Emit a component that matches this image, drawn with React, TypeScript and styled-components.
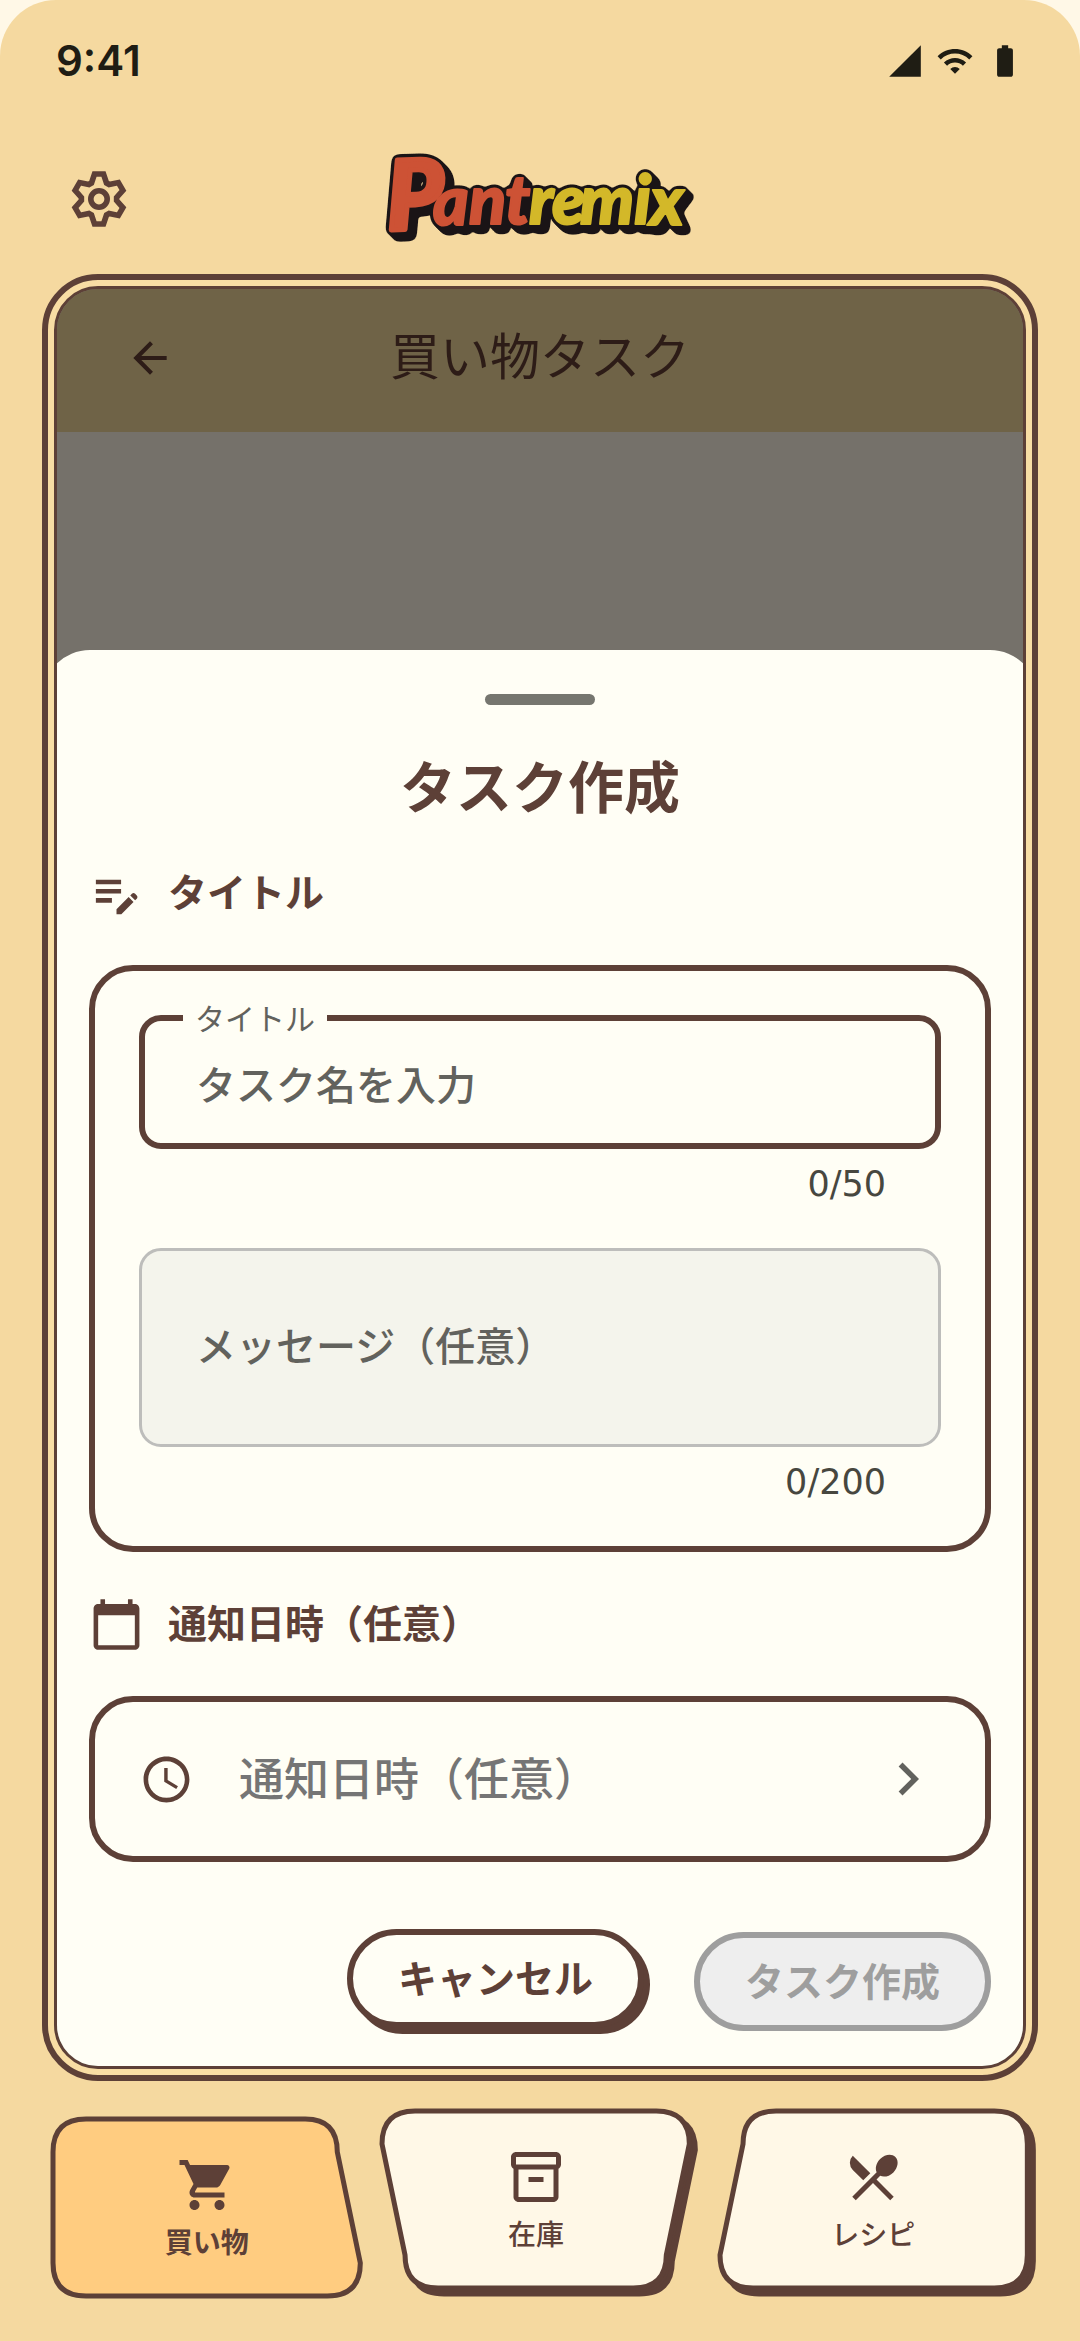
import React, { useState } from "react";
import styled, { createGlobalStyle } from "styled-components";
import {
  MdArrowBack,
  MdBatteryFull,
  MdCalendarToday,
  MdChevronRight,
  MdEditNote,
  MdOutlineInventory2,
  MdRestaurantMenu,
  MdSchedule,
  MdShoppingCart,
  MdSignalCellular4Bar,
  MdWifi,
} from "react-icons/md";

const color = {
  page: "#fff8e7",
  sand: "#f5d9a0",
  brown: "#5d4037",
  paper: "#fffef5",
  cream: "#fff8e7",
  active: "#ffcc80",
  hint: "#62625d",
  ink: "#1f1d14",
};

const GlobalStyle = createGlobalStyle`
  *, *::before, *::after { box-sizing: border-box; }
  body {
    margin: 0;
    background: ${color.page};
    font-family: "Noto Sans CJK JP", "Noto Sans", sans-serif;
    color: ${color.brown};
  }
  button, input, textarea { font: inherit; color: inherit; margin: 0; }
  svg { display: block; flex: none; }
`;

const Screen = styled.div`
  min-height: 100vh;
  display: flex;
  flex-direction: column;
  background: ${color.sand};
  border-radius: 56px 56px 0 0;
`;

const StatusBar = styled.div`
  height: 124px;
  padding: 0 56px 2px;
  display: flex;
  align-items: center;
  justify-content: space-between;
  color: ${color.ink};
`;

const Clock = styled.span`
  font-family: Inter, "Noto Sans", sans-serif;
  font-size: 42px;
  font-weight: 600;
  line-height: 48px;
`;

const StatusIcons = styled.div`
  display: flex;
  gap: 12px;
`;

const AppBar = styled.header`
  height: 150px;
  padding: 0 66px;
  display: grid;
  grid-template-columns: 1fr auto 1fr;
  align-items: center;
`;

const IconButton = styled.button`
  width: max-content;
  padding: 0;
  border: 0;
  background: none;
  cursor: pointer;
`;

const Frame = styled.main`
  flex: 1;
  display: flex;
  margin: 0 42px;
  padding: 6px;
  border: 6px solid ${color.brown};
  border-radius: 56px;
  background: #f8dda4;
`;

const Viewport = styled.div`
  flex: 1;
  min-width: 0;
  display: flex;
  flex-direction: column;
  border: 3px solid ${color.brown};
  border-radius: 44px;
  overflow: hidden;
  background: #75716a;
`;

const PageBar = styled.div`
  height: 143px;
  padding: 0 68px 6px;
  display: grid;
  grid-template-columns: 1fr auto 1fr;
  align-items: center;
  background: #6f6347;
  color: #2d1c17;
`;

const PageTitle = styled.h1`
  margin: 0;
  padding-bottom: 10px;
  font-size: 50px;
  font-weight: 400;
  line-height: 64px;
`;

const Scrim = styled.div`
  flex: 1;
`;

const Sheet = styled.form`
  margin: 0 -15px;
  padding: 44px 47px 32px;
  display: flex;
  flex-direction: column;
  border-radius: 48px 48px 0 0;
  background: ${color.paper};
`;

const Handle = styled.div`
  align-self: center;
  width: 110px;
  height: 11px;
  border-radius: 6px;
  background: #76766f;
`;

const SheetTitle = styled.h2`
  margin: 37px 0 0;
  text-align: center;
  font-size: 56px;
  font-weight: 700;
  line-height: 84px;
`;

const SectionHeading = styled.h3<{ $first?: boolean }>`
  margin: ${(p) => (p.$first ? 40 : 45)}px 0 44px;
  display: flex;
  align-items: flex-start;
  gap: 24px;
  font-size: 39px;
  font-weight: 700;
  line-height: 49px;
`;

const Card = styled.div`
  padding: 30px 44px 40px;
  border: 6px solid ${color.brown};
  border-radius: 44px;
`;

const OutlinedField = styled.fieldset`
  min-width: 0;
  margin: 0;
  padding: 0;
  border: 6px solid ${color.brown};
  border-radius: 22px;
`;

const FieldLegend = styled.legend`
  margin-left: 38px;
  padding: 0 12px;
  font-size: 30px;
  line-height: 33px;
  color: ${color.hint};
`;

const TextInput = styled.input`
  display: block;
  width: 100%;
  height: 109px;
  padding: 0 51px 12px;
  border: 0;
  outline: 0;
  background: none;
  font-size: 40px;
  font-weight: 500;

  &::placeholder { color: ${color.hint}; opacity: 1; }
`;

const Message = styled.textarea`
  display: block;
  width: 100%;
  height: 199px;
  margin-top: 40px;
  padding: 63px 54px;
  border: 3px solid #bdbdbb;
  border-radius: 22px;
  outline: 0;
  resize: none;
  background: #f4f4ec;
  font-size: 40px;
  font-weight: 500;
  line-height: 60px;

  &::placeholder { color: ${color.hint}; opacity: 1; }
`;

const Counter = styled.div`
  margin-top: 11px;
  padding-right: 55px;
  text-align: right;
  font-family: "DejaVu Sans", "Noto Sans", sans-serif;
  font-size: 35px;
  line-height: 48px;
  color: #47473f;
`;

const DateButton = styled.button`
  height: 166px;
  padding: 0 44px;
  display: flex;
  align-items: center;
  border: 6px solid ${color.brown};
  border-radius: 44px;
  background: none;
  text-align: left;
  cursor: pointer;
`;

const DateText = styled.span`
  flex: 1;
  padding: 0 0 6px 45px;
  font-size: 45px;
  font-weight: 500;
  color: #757575;
`;

const Actions = styled.div`
  margin-top: 67px;
  display: flex;
  justify-content: flex-end;
  align-items: center;
  gap: 44px;
`;

const Pill = styled.button<{ $raised?: boolean }>`
  width: 297px;
  height: 99px;
  padding: 0 0 6px;
  border: 6px solid ${color.brown};
  border-radius: 50px;
  background: ${color.paper};
  font-size: 39px;
  font-weight: 700;
  margin: ${(p) => (p.$raised ? "0 6px 6px 0" : "0")};
  box-shadow: ${(p) => (p.$raised ? `6px 6px 0 ${color.brown}` : "none")};
  cursor: pointer;

  &:disabled {
    border-color: #9e9e9e;
    background: #eeeeee;
    color: #9e9e9e;
    cursor: default;
  }
`;

const TabBar = styled.nav`
  margin: 27px 42px 42px;
  display: grid;
  grid-template-columns: repeat(3, 1fr);
  gap: 16px;
`;

const Tab = styled.a<{ $active: boolean }>`
  position: relative;
  isolation: isolate;
  height: 183px;
  margin: ${(p) => (p.$active ? "8px 0 0 8px" : "0 8px 8px 0")};
  padding-top: 39px;
  display: flex;
  flex-direction: column;
  align-items: center;
  gap: 6px;
  font-size: 28px;
  font-weight: ${(p) => (p.$active ? 700 : 500)};
  line-height: 40px;
  color: inherit;
  text-decoration: none;
`;

const TabShape = styled.svg`
  position: absolute;
  inset: 0;
  z-index: -1;
  width: 100%;
  height: 100%;
  overflow: visible;
`;

const tabs = [
  {
    label: "買い物",
    Icon: MdShoppingCart,
    path: "M36 3H255Q287 3 287 36L310 147Q310 180 277 180H36Q3 180 3 147V36Q3 3 36 3Z",
  },
  {
    label: "在庫",
    Icon: MdOutlineInventory2,
    path: "M36 3H277Q310 3 310 36L287 147Q287 180 254 180H59Q26 180 26 147L3 36Q3 3 36 3Z",
  },
  {
    label: "レシピ",
    Icon: MdRestaurantMenu,
    path: "M59 3H277Q310 3 310 36V147Q310 180 277 180H36Q3 180 3 147L26 36Q26 3 59 3Z",
  },
];

function GearIcon() {
  const tooth = [
    [-7.5, -16],
    [-4.5, -25],
    [4.5, -25],
    [7.5, -16],
  ];
  const points = [0, 60, 120, 180, 240, 300]
    .flatMap((deg) => {
      const a = (deg * Math.PI) / 180;
      return tooth.map(
        ([x, y]) =>
          `${(x * Math.cos(a) - y * Math.sin(a)).toFixed(2)},${(x * Math.sin(a) + y * Math.cos(a)).toFixed(2)}`
      );
    })
    .join(" ");
  return (
    <svg width="66" height="66" viewBox="-33 -33 66 66" fill="none" stroke={color.brown} strokeWidth="5.6" aria-hidden="true">
      <polygon points={points} />
      <circle r="8.2" />
    </svg>
  );
}

const LogoSvg = styled.svg`
  overflow: visible;
  font-family: Lato, "Open Sans", sans-serif;
  font-weight: 900;
  font-style: italic;

  text { stroke-width: 2px; stroke-linejoin: round; }
  .initial { stroke-width: 5px; }
  .red { fill: #cd5235; stroke: #cd5235; }
  .yellow { fill: #d3b829; stroke: #d3b829; }
`;

function Logo() {
  return (
    <LogoSvg width="312" height="90" viewBox="0 0 312 90" role="img" aria-label="Pantremix">
      <defs>
        {/* A rounded black outline, extruded towards the bottom right. */}
        <filter id="logo-outline" x="-20" y="-20" width="360" height="140" filterUnits="userSpaceOnUse" colorInterpolationFilters="sRGB">
          <feGaussianBlur in="SourceAlpha" stdDeviation="2.6" />
          <feComponentTransfer result="grown">
            <feFuncA type="linear" slope="14" intercept="-0.9" />
          </feComponentTransfer>
          <feOffset in="grown" dx="2" dy="2" result="o1" />
          <feOffset in="grown" dx="4" dy="4" result="o2" />
          <feOffset in="grown" dx="6" dy="6" result="o3" />
          <feMerge result="body">
            <feMergeNode in="grown" />
            <feMergeNode in="o1" />
            <feMergeNode in="o2" />
            <feMergeNode in="o3" />
          </feMerge>
          <feFlood floodColor="#1a1416" />
          <feComposite in2="body" operator="in" result="black" />
          <feMerge>
            <feMergeNode in="black" />
            <feMergeNode in="SourceGraphic" />
          </feMerge>
        </filter>
      </defs>
      <g filter="url(#logo-outline)">
        <text className="red initial" fontSize="96" transform="translate(4 76) rotate(-2)">P</text>
        <text className="red" fontSize="68" x="49 85 121" y="71 70 70">ant</text>
        <text className="yellow" fontSize="68" x="145 168 196 250 266" y="70 70 70 70 71">remix</text>
      </g>
    </LogoSvg>
  );
}

export default function App() {
  const [title, setTitle] = useState("");
  const [message, setMessage] = useState("");

  return (
    <>
      <GlobalStyle />
      <Screen>
        <StatusBar>
          <Clock>9:41</Clock>
          <StatusIcons>
            <MdSignalCellular4Bar size={38} />
            <MdWifi size={38} />
            <MdBatteryFull size={38} />
          </StatusIcons>
        </StatusBar>

        <AppBar>
          <IconButton type="button" aria-label="設定">
            <GearIcon />
          </IconButton>
          <Logo />
        </AppBar>

        <Frame>
          <Viewport>
            <PageBar>
              <IconButton type="button" aria-label="戻る">
                <MdArrowBack size={50} />
              </IconButton>
              <PageTitle>買い物タスク</PageTitle>
            </PageBar>
            <Scrim />
            <Sheet onSubmit={(e) => e.preventDefault()}>
              <Handle />
              <SheetTitle>タスク作成</SheetTitle>

              <SectionHeading $first>
                <MdEditNote size={55} />
                タイトル
              </SectionHeading>
              <Card>
                <OutlinedField>
                  <FieldLegend>
                    <label htmlFor="task-title">タイトル</label>
                  </FieldLegend>
                  <TextInput
                    id="task-title"
                    placeholder="タスク名を入力"
                    maxLength={50}
                    value={title}
                    onChange={(e) => setTitle(e.target.value)}
                  />
                </OutlinedField>
                <Counter>{title.length}/50</Counter>
                <Message
                  aria-label="メッセージ（任意）"
                  placeholder="メッセージ（任意）"
                  maxLength={200}
                  value={message}
                  onChange={(e) => setMessage(e.target.value)}
                />
                <Counter>{message.length}/200</Counter>
              </Card>

              <SectionHeading>
                <MdCalendarToday size={55} />
                通知日時（任意）
              </SectionHeading>
              <DateButton type="button">
                <MdSchedule size={55} />
                <DateText>通知日時（任意）</DateText>
                <MdChevronRight size={66} color={color.hint} />
              </DateButton>

              <Actions>
                <Pill type="button" $raised>キャンセル</Pill>
                <Pill type="submit" disabled={!title}>タスク作成</Pill>
              </Actions>
            </Sheet>
          </Viewport>
        </Frame>

        <TabBar>
          {tabs.map(({ label, Icon, path }, i) => (
            <Tab key={label} href="#" $active={i === 0} aria-current={i === 0 ? "page" : undefined}>
              <TabShape viewBox="0 0 313 183" preserveAspectRatio="none" aria-hidden="true">
                {i !== 0 && (
                  <path d={path} transform="translate(6 6)" fill={color.brown} stroke={color.brown} strokeWidth="5" />
                )}
                <path d={path} fill={i === 0 ? color.active : color.cream} stroke={color.brown} strokeWidth="5" />
              </TabShape>
              <Icon size={60} />
              {label}
            </Tab>
          ))}
        </TabBar>
      </Screen>
    </>
  );
}
